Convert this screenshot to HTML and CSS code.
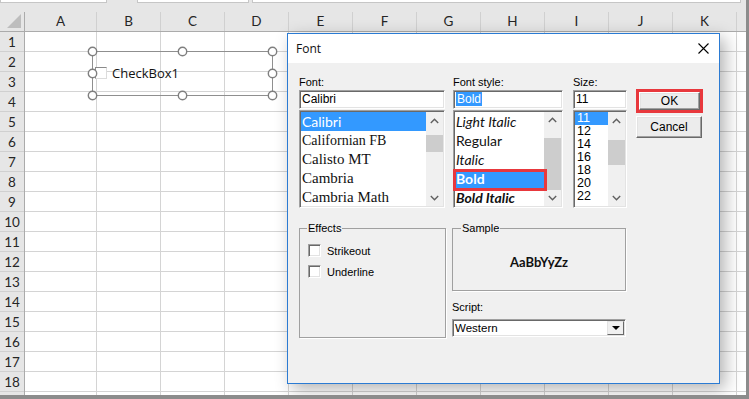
FILE: index.html
```html
<!DOCTYPE html>
<html>
<head>
<meta charset="utf-8">
<link rel="stylesheet" href="styles.css">
</head>
<body>
<div class="sheet">
  <div class="formula">
    <span class="fbox fb1"></span><span class="fbox fb2"></span><span class="fbox fb3"></span>
  </div>
  <div class="colheads">
    <div class="corner"><span class="tri"></span></div>
    <div class="ch">A</div>
    <div class="ch">B</div>
    <div class="ch">C</div>
    <div class="ch">D</div>
    <div class="ch">E</div>
    <div class="ch">F</div>
    <div class="ch">G</div>
    <div class="ch">H</div>
    <div class="ch">I</div>
    <div class="ch">J</div>
    <div class="ch">K</div>
    <div class="ch rest"></div>
  </div>
  <div class="body">
    <div class="rowheads">
      <div class="rh">1</div><div class="rh">2</div><div class="rh">3</div><div class="rh">4</div>
      <div class="rh">5</div><div class="rh">6</div><div class="rh">7</div><div class="rh">8</div>
      <div class="rh">9</div><div class="rh">10</div><div class="rh">11</div><div class="rh">12</div>
      <div class="rh">13</div><div class="rh">14</div><div class="rh">15</div><div class="rh">16</div>
      <div class="rh">17</div><div class="rh">18</div><div class="rh stub"></div>
    </div>
    <div class="col"></div><div class="col"></div><div class="col"></div><div class="col"></div>
    <div class="col"></div><div class="col"></div><div class="col"></div><div class="col"></div>
    <div class="col"></div><div class="col"></div><div class="col"></div>
    <div class="col rest"></div>
  </div>

  <div class="shape">
    <span class="sheetchk"></span><span class="sheetlbl">CheckBox1</span>
  </div>
  <svg class="handles" width="193" height="57" viewBox="0 0 193 57">
    <rect x="6.5" y="6.5" width="180" height="44" fill="none" stroke="#8f8f8f" stroke-width="1"/>
    <g fill="#fff" stroke="#7f7f7f" stroke-width="1.4">
      <circle cx="6.5" cy="6.5" r="4.2"/><circle cx="96.5" cy="6.5" r="4.2"/><circle cx="186.5" cy="6.5" r="4.2"/>
      <circle cx="6.5" cy="28.5" r="4.2"/><circle cx="186.5" cy="28.5" r="4.2"/>
      <circle cx="6.5" cy="50.5" r="4.2"/><circle cx="96.5" cy="50.5" r="4.2"/><circle cx="186.5" cy="50.5" r="4.2"/>
    </g>
  </svg>

  <div class="dialog">
    <div class="titlebar">
      <span>Font</span>
      <svg width="11" height="11" viewBox="0 0 11 11"><path d="M0.5 0.5 L10.5 10.5 M10.5 0.5 L0.5 10.5" stroke="#000" stroke-width="1.1" fill="none"/></svg>
    </div>
    <div class="dbody">
      <div class="top">
        <div class="fcol">
          <div class="lbl">Font:</div>
          <div class="input">Calibri</div>
          <div class="list">
            <div class="items">
              <div class="item sel f-cal">Calibri</div>
              <div class="item f-calif">Californian FB</div>
              <div class="item f-serif">Calisto MT</div>
              <div class="item f-serif">Cambria</div>
              <div class="item f-serif">Cambria Math</div>
            </div>
            <div class="sb">
              <div class="sbtn"><svg width="9" height="6" viewBox="0 0 9 6"><path d="M0.8 5 L4.5 1.3 L8.2 5" stroke="#606060" stroke-width="1.4" fill="none"/></svg></div>
              <div class="track"><div class="thumb" style="margin-top:6px;height:17px"></div></div>
              <div class="sbtn"><svg width="9" height="6" viewBox="0 0 9 6"><path d="M0.8 1 L4.5 4.7 L8.2 1" stroke="#606060" stroke-width="1.4" fill="none"/></svg></div>
            </div>
          </div>
        </div>
        <div class="scol">
          <div class="lbl">Font style:</div>
          <div class="input"><span class="hl">Bold</span></div>
          <div class="list">
            <div class="items">
              <div class="item st it">Light Italic</div>
              <div class="item st">Regular</div>
              <div class="item st it">Italic</div>
              <div class="item st b sel marked">Bold</div>
              <div class="item st bi">Bold Italic</div>
            </div>
            <div class="sb">
              <div class="sbtn"><svg width="9" height="6" viewBox="0 0 9 6"><path d="M0.8 5 L4.5 1.3 L8.2 5" stroke="#606060" stroke-width="1.4" fill="none"/></svg></div>
              <div class="track"><div class="thumb" style="margin-top:9px;height:52px"></div></div>
              <div class="sbtn"><svg width="9" height="6" viewBox="0 0 9 6"><path d="M0.8 1 L4.5 4.7 L8.2 1" stroke="#606060" stroke-width="1.4" fill="none"/></svg></div>
            </div>
          </div>
        </div>
        <div class="zcol">
          <div class="lbl">Size:</div>
          <div class="input">11</div>
          <div class="list">
            <div class="items">
              <div class="zitem sel">11</div>
              <div class="zitem">12</div>
              <div class="zitem">14</div>
              <div class="zitem">16</div>
              <div class="zitem">18</div>
              <div class="zitem">20</div>
              <div class="zitem">22</div>
            </div>
            <div class="sb">
              <div class="sbtn"><svg width="9" height="6" viewBox="0 0 9 6"><path d="M0.8 5 L4.5 1.3 L8.2 5" stroke="#606060" stroke-width="1.4" fill="none"/></svg></div>
              <div class="track"><div class="thumb" style="margin-top:11px;height:25px"></div></div>
              <div class="sbtn"><svg width="9" height="6" viewBox="0 0 9 6"><path d="M0.8 1 L4.5 4.7 L8.2 1" stroke="#606060" stroke-width="1.4" fill="none"/></svg></div>
            </div>
          </div>
        </div>
        <div class="btns">
          <div class="okframe"><div class="btn">OK</div></div>
          <div class="btn cancel">Cancel</div>
        </div>
      </div>
      <div class="bottom">
        <fieldset class="group effects">
          <legend>Effects</legend>
          <div class="chkrow first"><span class="chk"></span>Strikeout</div>
          <div class="chkrow"><span class="chk"></span>Underline</div>
        </fieldset>
        <div class="right">
          <fieldset class="group sample">
            <legend>Sample</legend>
            <div class="sampletext">AaBbYyZz</div>
          </fieldset>
          <div class="lbl script">Script:</div>
          <div class="select">
            <span class="seltext">Western</span>
            <span class="dropbtn"><span class="arrow"></span></span>
          </div>
        </div>
      </div>
    </div>
  </div>
</div>
</body>
</html>
```

FILE: styles.css
```css
* { box-sizing: border-box; }

body {
  margin: 0;
  width: 749px;
  height: 399px;
  overflow: hidden;
  background: #8c8c8c;
}

.sheet {
  position: relative;
  width: 746px;
  height: 395px;
  background: #fff;
  overflow: hidden;
  font-family: Lato, "Liberation Sans", sans-serif;
}

/* formula bar remnants */
.formula {
  height: 12px;
  background: #e6e6e6;
  display: flex;
  align-items: flex-start;
}
.fbox {
  height: 3px;
  background: #fff;
  border: 1px solid #c6c6c6;
  border-top: 0;
}
.fb1 { width: 107px; }
.fb2 { width: 112px; margin-left: 30px; }
.fb3 { width: 489px; margin-left: 3px; }

/* shared column template */
.colheads, .body {
  display: grid;
  grid-template-columns: 25px 72px repeat(10, 64px) 9px;
}

/* column headers */
.colheads {
  height: 20px;
  background: #e6e6e6;
  border-bottom: 1px solid #ababab;
}
.corner {
  border-right: 1px solid #ababab;
  display: flex;
  justify-content: flex-end;
  align-items: flex-end;
  padding: 0 3px 3px 0;
}
.tri {
  width: 14px;
  height: 14px;
  background: #bdbdbd;
  clip-path: polygon(100% 0, 100% 100%, 0 100%);
}
.ch {
  border-right: 1px solid #d0d0d0;
  text-align: center;
  font-size: 13.5px;
  line-height: 19px;
  color: #262626;
}
.ch.rest { border-right: 0; }

/* rows */
.body {
  height: 363px;
  background: repeating-linear-gradient(to bottom, transparent 0 19px, #d4d4d4 19px 20px);
}
.rowheads {
  background: #e6e6e6;
  border-right: 1px solid #ababab;
}
.rh {
  height: 20px;
  border-bottom: 1px solid #d0d0d0;
  text-align: center;
  font-size: 13.5px;
  line-height: 20px;
  color: #262626;
}
.rh.stub { height: 3px; border-bottom: 0; }
.col { border-right: 1px solid #d4d4d4; }
.col.rest { border-right: 0; }

/* checkbox shape on the sheet */
.shape {
  position: absolute;
  left: 95px;
  top: 64px;
  height: 18px;
  display: flex;
  align-items: center;
  gap: 5px;
}
.sheetchk {
  width: 12px;
  height: 12px;
  background: #fff;
  border: 1px solid;
  border-color: #8a8a8a #dcdcdc #dcdcdc #8a8a8a;
}
.sheetlbl {
  font-family: "Open Sans", sans-serif;
  font-size: 13px;
  color: #111;
}
.handles {
  position: absolute;
  left: 86px;
  top: 45px;
}

/* dialog */
.dialog {
  position: absolute;
  left: 287px;
  top: 33px;
  width: 433px;
  height: 351px;
  border: 1px solid #2b7bd3;
  background: #f0f0f0;
  box-shadow: 5px 5px 16px rgba(0, 0, 0, 0.3);
  font-family: "Liberation Sans", Arial, sans-serif;
  font-size: 11px;
  color: #000;
}
.titlebar {
  height: 29px;
  background: #fff;
  display: flex;
  align-items: center;
  justify-content: space-between;
  padding: 0 10px 1px 8px;
  font-family: "Open Sans", sans-serif;
  font-size: 12px;
  color: #111;
}
.dbody { padding: 12px 0 0 11px; }
.top { display: flex; align-items: flex-start; }
.fcol { width: 146px; flex: none; }
.scol { width: 110px; flex: none; margin-left: 8px; }
.zcol { width: 54px; flex: none; margin-left: 10px; }
.btns { width: 67px; flex: none; margin-left: 9px; margin-top: 14px; }

.lbl { height: 15px; line-height: 14px; }

.input, .list, .select {
  background: #fff;
  border: 1px solid;
  border-color: #a0a0a0 #fff #fff #a0a0a0;
  box-shadow: inset 1px 1px #696969, inset -1px -1px #e3e3e3;
}
.input {
  height: 19px;
  font-size: 12px;
  line-height: 17px;
  padding-left: 2px;
}
.hl { background: #3399ff; color: #fff; padding: 0 1px; }

.list {
  height: 98px;
  margin-top: 1px;
  display: flex;
}
.items {
  flex: 1;
  padding: 1px 0 0 1px;
  min-width: 0;
}
.item {
  height: 19px;
  line-height: 19px;
  padding-left: 1px;
  white-space: nowrap;
  color: #111;
}
.item.sel, .zitem.sel { background: #3399ff; color: #fff; }
.f-cal { font-family: Lato, sans-serif; font-size: 14px; }
.f-calif { font-family: "Liberation Serif", serif; font-size: 14px; }
.f-serif { font-family: "Liberation Serif", serif; font-size: 15px; }
.st { font-family: Lato, sans-serif; font-size: 14px; }
.it { font-style: italic; }
.b { font-weight: 700; }
.bi { font-weight: 700; font-style: italic; }
.marked { position: relative; }
.marked::after {
  content: "";
  position: absolute;
  top: 0;
  bottom: -3px;
  left: -2px;
  right: -3px;
  border: 3px solid #e8383d;
}
.zitem {
  height: 13px;
  line-height: 13px;
  font-size: 12.5px;
  padding-left: 2px;
}

.sb {
  width: 17px;
  flex: none;
  margin: 1px 1px 1px 0;
  display: flex;
  flex-direction: column;
  background: #f0f0f0;
}
.sbtn {
  height: 17px;
  display: flex;
  align-items: center;
  justify-content: center;
}
.track { flex: 1; }
.thumb { background: #cdcdcd; width: 100%; }

/* buttons */
.okframe {
  height: 24px;
  border: 3px solid #e8383d;
}
.btn {
  display: flex;
  align-items: center;
  justify-content: center;
  height: 18px;
  background: #ececec;
  border: 1px solid;
  border-color: #fff #696969 #696969 #fff;
  box-shadow: inset -1px -1px #a0a0a0, inset 1px 1px #e3e3e3;
  font-size: 12px;
}
.cancel { width: 66px; height: 22px; margin-top: 3px; }

/* lower section */
.bottom { display: flex; margin-top: 13px; align-items: flex-start; }
.group {
  margin: 0;
  border: 1px solid #a0a0a0;
  box-shadow: 1px 1px 0 #fff;
}
.group legend {
  padding: 0 1px;
  line-height: 14px;
}
.effects {
  width: 147px;
  height: 117px;
  padding: 0 0 0 7px;
}
.chkrow {
  display: flex;
  align-items: center;
  gap: 6px;
  height: 13px;
  margin-top: 8px;
  margin-left: 1px;
}
.chkrow.first { margin-top: 9px; }
.chk {
  width: 13px;
  height: 13px;
  background: #fff;
  border: 1px solid;
  border-color: #a0a0a0 #fff #fff #a0a0a0;
  box-shadow: inset 1px 1px #696969, inset -1px -1px #e3e3e3;
}
.right { width: 174px; margin-left: 6px; }
.sample {
  height: 70px;
  padding: 0 0 0 8px;
}
.sampletext {
  display: flex;
  justify-content: center;
  padding-top: 19px;
  padding-right: 8px;
  font-family: Lato, sans-serif;
  font-weight: 700;
  font-size: 13px;
  color: #111;
}
.lbl.script { margin-top: 9px; }
.select {
  height: 18px;
  margin-top: 4px;
  display: flex;
  align-items: stretch;
  justify-content: space-between;
  font-size: 11.5px;
}
.seltext { padding-left: 2px; line-height: 16px; }
.dropbtn {
  width: 17px;
  margin: 1px 1px 1px 0;
  background: #f0f0f0;
  border: 1px solid;
  border-color: #e3e3e3 #696969 #696969 #e3e3e3;
  display: flex;
  align-items: center;
  justify-content: center;
}
.arrow {
  width: 0;
  height: 0;
  border-left: 4px solid transparent;
  border-right: 4px solid transparent;
  border-top: 4px solid #000;
}
```
